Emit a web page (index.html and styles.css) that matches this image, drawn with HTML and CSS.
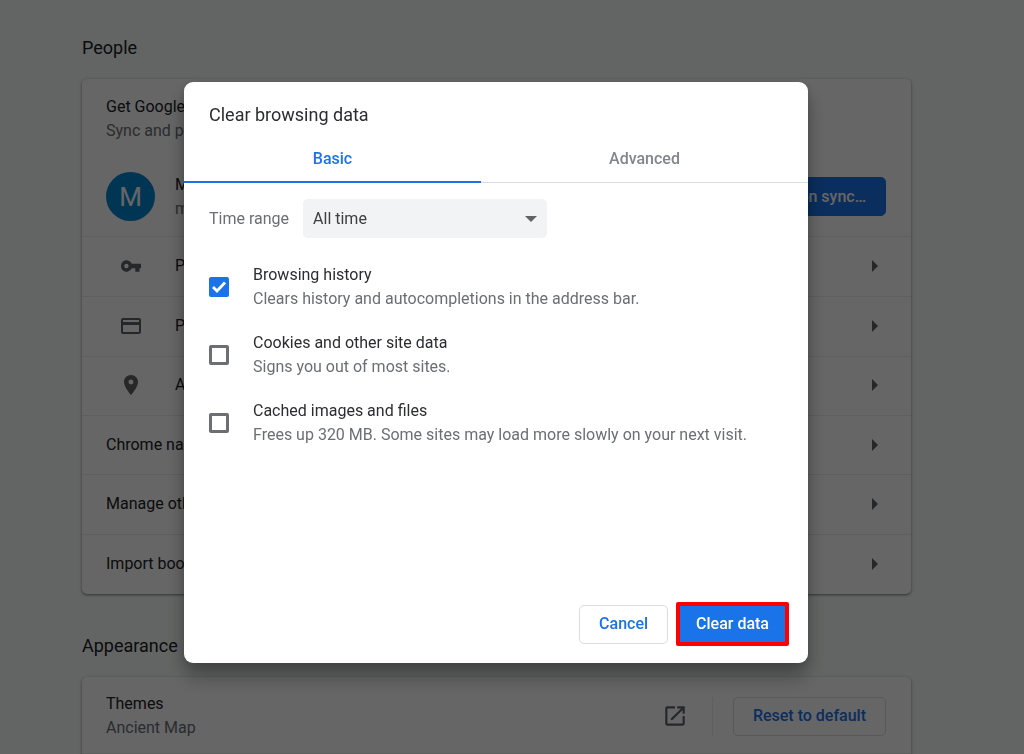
FILE: index.html
```html
<!DOCTYPE html>
<html lang="en">
<head>
<meta charset="utf-8">
<title>Settings</title>
<link rel="stylesheet" href="styles.css">
</head>
<body>
<main class="page">
  <section class="section">
    <h2 class="section-title">People</h2>
    <div class="card">
      <div class="profile">
        <div class="primary">Get Google</div>
        <div class="secondary">Sync and p</div>
        <div class="account">
          <span class="avatar">M</span>
          <div class="account-text">
            <div class="primary">M</div>
            <div class="secondary">m</div>
          </div>
          <button class="button button-filled" type="button">Turn on sync…</button>
        </div>
      </div>
      <a class="row row-icons" href="#passwords">
        <span class="row-icon"><svg width="24" height="24" viewBox="0 0 24 24"><path fill-rule="evenodd" d="M12.8 9.7A5.7 5.7 0 1 0 12.8 14.3H16.3v3.4h4.2v-3.4H22V9.7zM7.4 14.2a2.2 2.2 0 1 1 0-4.4a2.2 2.2 0 0 1 0 4.4z"/></svg></span>
        <span class="row-label">P</span><span class="arrow"></span>
      </a>
      <a class="row row-icons" href="#payments">
        <span class="row-icon"><svg width="24" height="24" viewBox="0 0 24 24"><path d="M20 4H4c-1.11 0-1.99.89-1.99 2L2 18c0 1.11.89 2 2 2h16c1.11 0 2-.89 2-2V6c0-1.11-.89-2-2-2zm0 14H4v-7h16v7zm0-10H4V6h16v2z"/></svg></span>
        <span class="row-label">P</span><span class="arrow"></span>
      </a>
      <a class="row row-icons" href="#addresses">
        <span class="row-icon"><svg width="24" height="24" viewBox="0 0 24 24"><path d="M12 2C8.13 2 5 5.13 5 9c0 5.25 7 13 7 13s7-7.75 7-13c0-3.87-3.13-7-7-7zm0 9.5a2.5 2.5 0 0 1 0-5 2.5 2.5 0 0 1 0 5z"/></svg></span>
        <span class="row-label">A</span><span class="arrow"></span>
      </a>
      <a class="row" href="#name"><span class="row-label">Chrome na</span><span class="arrow"></span></a>
      <a class="row" href="#people"><span class="row-label">Manage oth</span><span class="arrow"></span></a>
      <a class="row" href="#import"><span class="row-label">Import boo</span><span class="arrow"></span></a>
    </div>
  </section>
  <section class="section">
    <h2 class="section-title">Appearance</h2>
    <div class="card card-open">
      <div class="theme">
        <div class="theme-text">
          <div class="primary">Themes</div>
          <div class="secondary">Ancient Map</div>
        </div>
        <a class="external" href="#themes" aria-label="Open themes"><svg width="26" height="26" viewBox="0 0 24 24"><path d="M19 19H5V5h7V3H5a2 2 0 0 0-2 2v14a2 2 0 0 0 2 2h14c1.1 0 2-.9 2-2v-7h-2v7zM14 3v2h3.59l-9.83 9.83 1.41 1.41L19 6.41V10h2V3h-7z"/></svg></a>
        <span class="separator"></span>
        <button class="button" type="button">Reset to default</button>
      </div>
    </div>
  </section>
</main>
<div class="backdrop">
  <form class="dialog" role="dialog" aria-modal="true" aria-labelledby="dialog-title">
    <h1 class="dialog-title" id="dialog-title">Clear browsing data</h1>
    <div class="tabs" role="tablist">
      <button class="tab tab-selected" type="button" role="tab" aria-selected="true">Basic</button>
      <button class="tab tab-wide" type="button" role="tab" aria-selected="false">Advanced</button>
    </div>
    <div class="dialog-body">
      <div class="range">
        <label for="range">Time range</label>
        <select class="select" id="range"><option>All time</option></select>
      </div>
      <label class="option">
        <input class="check" type="checkbox" checked>
        <span class="option-text"><span class="option-name">Browsing history</span><span class="option-note">Clears history and autocompletions in the address bar.</span></span>
      </label>
      <label class="option">
        <input class="check" type="checkbox">
        <span class="option-text"><span class="option-name">Cookies and other site data</span><span class="option-note">Signs you out of most sites.</span></span>
      </label>
      <label class="option">
        <input class="check" type="checkbox">
        <span class="option-text"><span class="option-name">Cached images and files</span><span class="option-note">Frees up 320 MB. Some sites may load more slowly on your next visit.</span></span>
      </label>
    </div>
    <div class="actions">
      <button class="button" type="button">Cancel</button>
      <button class="button button-filled button-marked" type="button">Clear data</button>
    </div>
  </form>
</div>
</body>
</html>
```
FILE: styles.css
```css
* { box-sizing: border-box; }

body {
  margin: 0;
  height: 100vh;
  overflow: hidden;
  background: #f6fcf8;
  color: #202124;
  font: 16px/24px Roboto, sans-serif;
}

.page {
  display: flex;
  flex-direction: column;
  gap: 40px;
  padding: 36px 113px 0 82px;
}

.section-title {
  margin: 0 0 19px;
  font-size: 18px;
  font-weight: 400;
}

.card {
  background: #fff;
  border-radius: 5px;
  box-shadow: 0 1px 2px rgba(60, 64, 67, .5), 0 1px 3px 1px rgba(60, 64, 67, .15);
}

.card-open { padding-bottom: 24px; }

.secondary { color: #6b6f74; }

.profile { padding: 16px 25px 15px 24px; }

.account {
  display: flex;
  align-items: center;
  gap: 20px;
  padding-top: 29px;
}

.account-text { flex: 1; }

.avatar {
  width: 49px;
  height: 49px;
  border-radius: 50%;
  background: #0288d1;
  color: #fff;
  font-size: 26px;
  line-height: 50px;
  text-align: center;
}

.button {
  height: 39px;
  padding: 0 19px;
  border: 1px solid #dadce0;
  border-radius: 5px;
  background: #fff;
  color: #1a73e8;
  font: 500 16px/24px Roboto, sans-serif;
}

.button-filled {
  border-color: #1a73e8;
  background: #1a73e8;
  color: #fff;
}

.button-marked {
  height: 44px;
  border: 4px solid #f00;
  border-radius: 2px;
  padding: 0 16px;
}

.row {
  display: flex;
  align-items: center;
  gap: 20px;
  height: 60px;
  padding: 0 33px 1px 24px;
  border-top: 1px solid #eceded;
  color: inherit;
  text-decoration: none;
}

.row-icons { padding-bottom: 2px; }

.row:nth-child(4),
.row:nth-child(5) { height: 59px; }

.row-icon {
  display: flex;
  justify-content: center;
  width: 49px;
  fill: #5f6368;
}

.row-label { flex: 1; }

.arrow {
  border: solid transparent;
  border-width: 6px 0 6px 6px;
  border-left-color: #5f6368;
}

.theme {
  display: flex;
  align-items: center;
  padding: 15px 25px 13px 24px;
  border-bottom: 1px solid #eceded;
}

.theme-text { flex: 1; }

.external {
  display: flex;
  fill: #5f6368;
}

.separator {
  width: 1px;
  height: 39px;
  margin: 0 20px 0 24px;
  background: #eceded;
}

.backdrop {
  position: fixed;
  inset: 0;
  display: flex;
  align-items: flex-start;
  justify-content: center;
  padding: 82px 32px 0 0;
  background: rgba(0, 0, 0, .6);
}

.dialog {
  display: flex;
  flex-direction: column;
  width: 624px;
  max-width: 100%;
  min-height: 581px;
  border-radius: 9px;
  background: #fff;
  box-shadow: 0 14px 20px rgba(0, 0, 0, .3), 0 2px 10px rgba(0, 0, 0, .15);
  color: #3c4043;
}

.dialog-title {
  margin: 0;
  padding: 21px 25px 8px;
  color: #2c2d30;
  font-size: 18px;
  font-weight: 400;
  line-height: 24px;
}

.tabs {
  display: flex;
  border-bottom: 1px solid #dadce0;
}

.tab {
  flex: 297;
  height: 48px;
  margin-bottom: -1px;
  padding: 2px 0 0;
  border: 0;
  border-bottom: 2px solid transparent;
  background: none;
  color: #80868b;
  font: 500 16px/24px Roboto, sans-serif;
}

.tab-wide { flex: 327; }

.tab-selected {
  border-bottom-color: #1a73e8;
  color: #1a73e8;
}

.dialog-body {
  display: flex;
  flex: 1;
  flex-direction: column;
  gap: 20px;
  padding: 16px 25px;
}

.range {
  display: flex;
  align-items: center;
  gap: 14px;
  margin-bottom: 5px;
  color: #6b6f74;
}

.select {
  width: 244px;
  height: 39px;
  padding: 0 10px;
  border: 0;
  border-radius: 5px;
  appearance: none;
  background: #f1f3f4 url("data:image/svg+xml,%3Csvg xmlns='http://www.w3.org/2000/svg' width='12' height='6'%3E%3Cpath fill='%235f6368' d='M0 0h12L6 6z'/%3E%3C/svg%3E") no-repeat right 10px center;
  color: #3c4043;
  font: 16px/24px Roboto, sans-serif;
}

.option {
  display: flex;
  align-items: center;
  gap: 24px;
}

.option-text {
  display: flex;
  flex-direction: column;
}

.option-name { color: #2c2d30; }

.option-note { color: #6b6f74; }

.check {
  width: 20px;
  height: 20px;
  margin: 0;
  border: 3px solid #6b6f74;
  border-radius: 2px;
  appearance: none;
}

.check:checked {
  border-color: #1a73e8;
  background: #1a73e8 url("data:image/svg+xml,%3Csvg xmlns='http://www.w3.org/2000/svg' viewBox='0 0 16 16'%3E%3Cpath fill='none' stroke='white' stroke-width='2.8' d='M2 8l4 4 8-8.5'/%3E%3C/svg%3E") center / 16px no-repeat;
}

.actions {
  display: flex;
  align-items: center;
  justify-content: flex-end;
  gap: 8px;
  padding: 0 19px 17px;
}
```
